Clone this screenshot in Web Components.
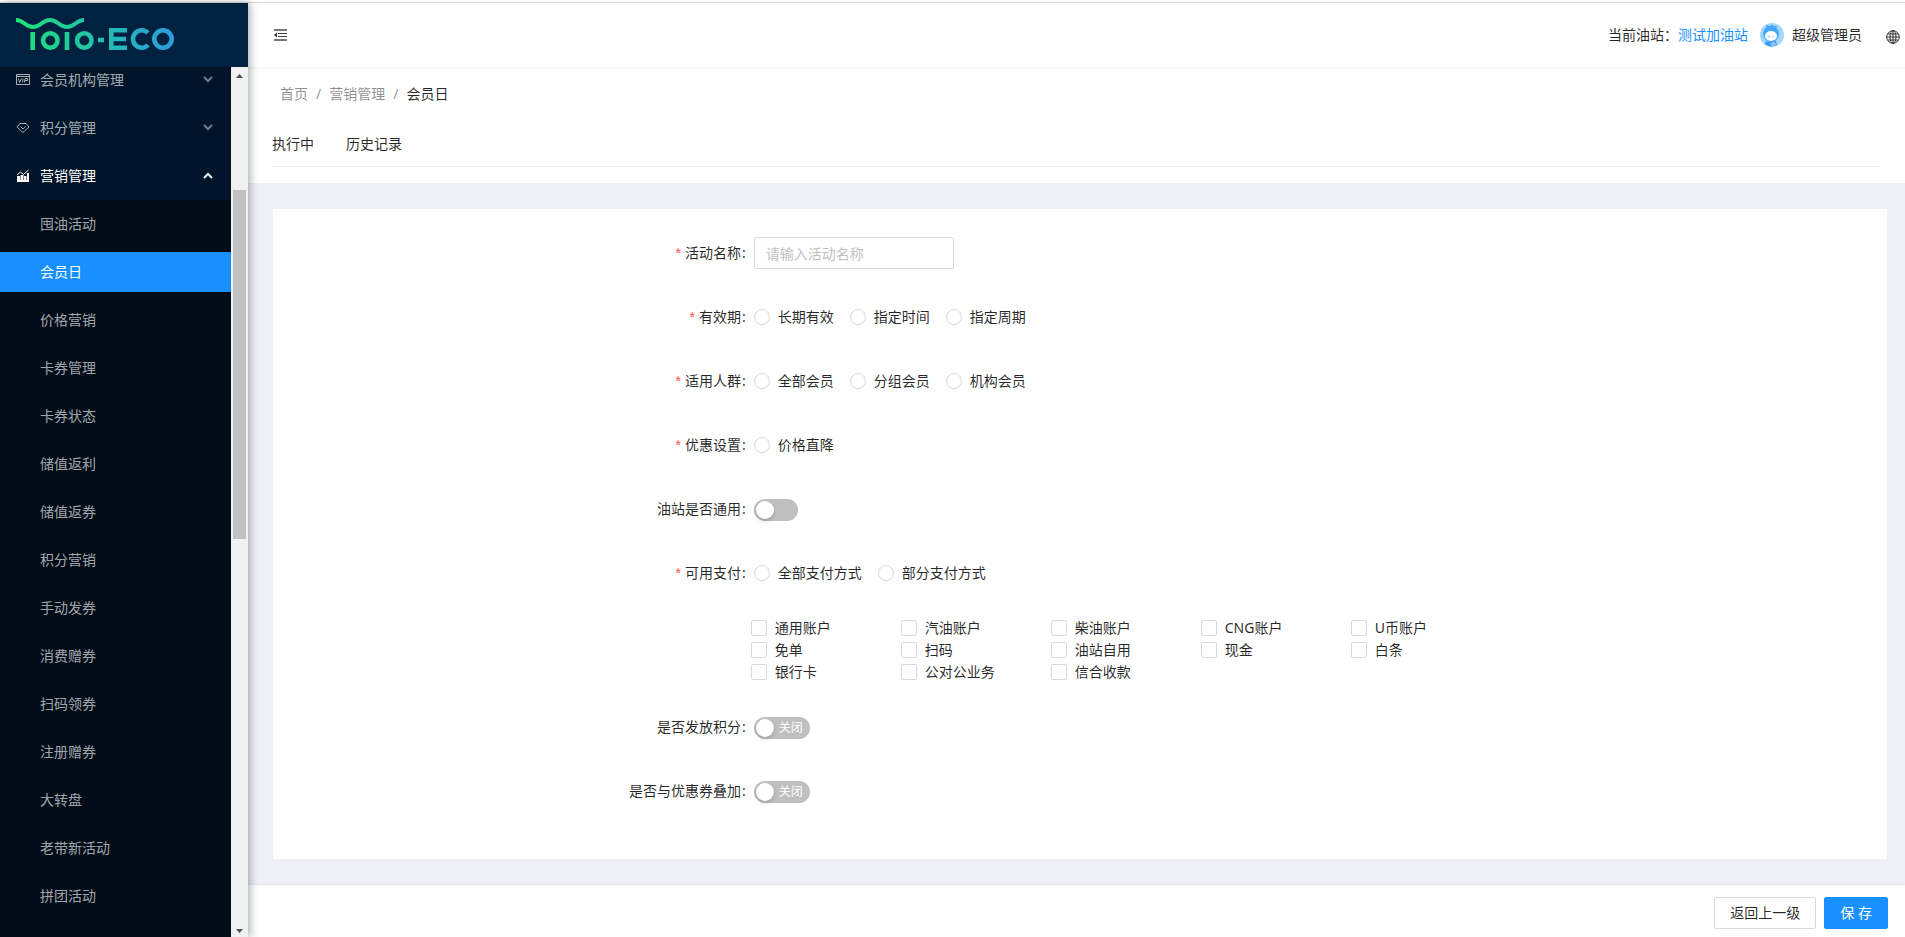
<!DOCTYPE html>
<html lang="zh-CN">
<head>
<meta charset="utf-8">
<title>会员日</title>
<style>
  html, body { height: 100%; }
  body {
    margin: 0;
    font: 14px/22px "Noto Sans", "Noto Sans CJK SC", sans-serif;
    color: rgba(0, 0, 0, .85);
    background: #fff;
  }
</style>
</head>
<body>
<eco-app></eco-app>
<script>
class Base extends HTMLElement {
  constructor() {
    super();
    this.attachShadow({ mode: 'open' });
  }
  connectedCallback() {
    if (!this.shadowRoot.firstChild) this.shadowRoot.innerHTML = this.view();
  }
  attr(name) { return this.getAttribute(name) || ''; }
}

customElements.define('eco-logo', class extends Base {
  view() {
    return `<style>
      :host { display: flex; flex: none; height: 64px; background: #002140; align-items: center; padding-left: 12px; }
      svg { display: block; }
    </style>
    <svg width="166" height="36" viewBox="12 17 166 36" fill="none" stroke="url(#g)" role="img" aria-label="TOTO-ECO">
      <defs><linearGradient id="g" gradientUnits="userSpaceOnUse" x1="16" y1="0" x2="176" y2="0">
        <stop offset="0" stop-color="#1be577"/><stop offset="1" stop-color="#2b9be0"/>
      </linearGradient></defs>
      <path stroke-width="4" d="M16 20C24 20 25 27 33 27C41 27 42 20 50 20C58 20 59 27 67 27C75 27 76 20 84 20"/>
      <path stroke-width="4.600" d="M32.700 32V50M67 32V50"/>
      <circle stroke-width="4.600" cx="50.300" cy="40.500" r="7.200"/>
      <circle stroke-width="4.600" cx="84.300" cy="40.500" r="7.200"/>
      <path stroke-width="4.600" d="M98 40H104M127 30.300H111.300V47.700H127M111 39H126"/>
      <path stroke-width="4.600" d="M148 33A8.700 8.700 0 1 0 148 45"/>
      <circle stroke-width="4.600" cx="163" cy="39" r="8.700"/>
    </svg>`;
  }
});

const MENU_ICONS = {
  vip: '<path d="M.5 1.500H13.500V11.500H.5ZM.5 3.500H13.500M2.500 5.500L3.500 9.500L5.500 5.500M7 5.500L6.500 9.500M8.500 9.500L9 5.500H11.500V7.500H9"/>',
  gem: '<path d="M4 2.500H10L13 6L7 11.500L1 6ZM4.500 5.500L7 8L9.500 5.500"/>',
  chart: '<path fill="currentColor" stroke="none" d="M1 7H4V11H1ZM4.500 6H7.500V11H4.500ZM8 7H10.500V11H8ZM11 4H13V11H11ZM1 11H13V13H1Z"/><path d="M1 6L4.500 3L7.500 5.500L12.500 1"/>'
};

customElements.define('eco-submenu', class extends Base {
  view() {
    const open = this.hasAttribute('open');
    return `<style>
      :host { display: flow-root; color: rgba(255, 255, 255, .65); }
      :host([open]) { color: #fff; }
      button { display: flex; align-items: center; width: 100%; height: 40px; margin: 4px 0; padding: 0 16px; border: 0; background: none; color: inherit; font: inherit; text-align: left; }
      .icon { margin-right: 10px; }
      .arrow { opacity: .7; }
      :host([open]) .arrow { opacity: 1; }
      span { flex: 1; }
      .items { background: #000c17; padding: 4px 0 48px; display: flex; flex-direction: column; gap: 8px; }
    </style>
    <button aria-expanded="${open}">
      <svg class="icon" width="14" height="14" viewBox="0 0 14 14" fill="none" stroke="currentColor">${MENU_ICONS[this.attr('icon')]}</svg>
      <span>${this.attr('label')}</span>
      <svg class="arrow" width="14" height="14" viewBox="0 0 14 14" fill="none" stroke="currentColor" stroke-width="2"><path d="${open ? 'M3 9L7 5L11 9' : 'M3 4L7 8L11 4'}"/></svg>
    </button>
    ${open ? '<div class="items"><slot></slot></div>' : ''}`;
  }
});

customElements.define('eco-menu-item', class extends Base {
  view() {
    return `<style>
      :host { display: block; color: rgba(255, 255, 255, .65); }
      :host([active]) { color: #fff; background: #1890ff; }
      a { display: block; padding-left: 40px; line-height: 40px; color: inherit; text-decoration: none; }
    </style><a href="#"><slot></slot></a>`;
  }
});

customElements.define('eco-scrollbar', class extends Base {
  view() {
    return `<style>
      :host { display: grid; grid-template-rows: 17px 106fr 349fr 381fr 17px; width: 17px; background: #f1f1f1; }
      i { grid-row: 3; margin: 0 2px; background: #c1c1c1; }
      svg { display: block; fill: #505050; }
      .down { grid-row: 5; }
    </style>
    <svg width="17" height="17"><path d="M5 11L8.500 7L12 11Z"/></svg>
    <i></i>
    <svg class="down" width="17" height="17"><path d="M5 9L8.500 13L12 9Z"/></svg>`;
  }
});

customElements.define('eco-sidebar', class extends Base {
  view() {
    const items = ['囤油活动', '会员日', '价格营销', '卡券管理', '卡券状态', '储值返利', '储值返券', '积分营销', '手动发券', '消费赠券', '扫码领券', '注册赠券', '大转盘', '老带新活动', '拼团活动'];
    return `<style>
      :host { display: flex; flex-direction: column; width: 248px; background: #001529; box-shadow: 2px 0 8px rgba(0, 21, 41, .35); }
      .scroll { flex: 1; min-height: 0; display: flex; }
      nav { flex: 1; overflow: hidden; display: flex; flex-direction: column; }
      .list { margin-top: -11px; }
    </style>
    <eco-logo></eco-logo>
    <div class="scroll">
      <nav><div class="list">
        <eco-submenu icon="vip" label="会员机构管理"></eco-submenu>
        <eco-submenu icon="gem" label="积分管理"></eco-submenu>
        <eco-submenu icon="chart" label="营销管理" open>
          ${items.map(t => `<eco-menu-item${t === '会员日' ? ' active' : ''}>${t}</eco-menu-item>`).join('')}
        </eco-submenu>
      </div></nav>
      <eco-scrollbar></eco-scrollbar>
    </div>`;
  }
});

customElements.define('eco-topbar', class extends Base {
  view() {
    return `<style>
      :host { display: flex; flex: none; align-items: center; height: 64px; padding: 0 5px 0 24px; background: #fff; box-shadow: 0 1px 4px rgba(0, 21, 41, .08); position: relative; }
      button { display: flex; padding: 0; border: 0; background: none; color: inherit; }
      .gap { flex: 1; }
      a { color: #1890ff; text-decoration: none; }
      .avatar { margin: 0 8px 0 12px; }
      .lang { margin: 4px 0 0 24px; }
    </style>
    <button aria-label="收起菜单"><svg width="16" height="16" viewBox="0 0 16 16" fill="none" stroke="#444"><path stroke="#777" stroke-width="2" d="M2 3H15M2 13H15"/><path d="M6 6.500H15M6 9.500H15"/><path fill="#333" stroke="none" d="M2 8L5 5.500V10.500Z"/></svg></button>
    <span class="gap"></span>
    <span>当前油站：</span><a href="#">测试加油站</a>
    <svg class="avatar" width="24" height="24" viewBox="0 0 24 24">
      <circle cx="12" cy="12" r="12" fill="#a3d6fb"/>
      <path d="M7 5L6 2L10 3.500L12 1.500L14 3.500L17 3L16 5Z" fill="#3f9bee"/>
      <circle cx="11" cy="11" r="8" fill="#42a9fb"/>
      <path d="M5 19C8 18 13 19 16 18L17 22C13 24 8 24 5 21Z" fill="#3f9bee"/>
      <path d="M10 20L15 19L16 22L12 23Z" fill="#8fc8f7"/>
      <ellipse cx="11" cy="13" rx="6" ry="5" fill="#fff"/>
      <path d="M7.500 13.500L9 14L10 13.500M12 14L13.500 13.500" stroke="#7bb8e8" fill="none"/>
    </svg>
    <span>超级管理员</span>
    <button class="lang" aria-label="语言"><svg width="14" height="14" viewBox="0 0 14 14" fill="none" stroke="#333"><circle cx="7" cy="7" r="6.300"/><ellipse cx="7" cy="7" rx="3" ry="6.300"/><path d="M7 .7V13.300M.7 7H13.300M1.700 4H12.300M1.700 10H12.300"/></svg></button>`;
  }
});

customElements.define('eco-page-head', class extends Base {
  view() {
    return `<style>
      :host { display: block; flex: none; background: #fff; padding: 16px 25px 16px 24px; }
      .crumbs { display: flex; gap: 8px; padding-left: 8px; color: rgba(0, 0, 0, .45); }
      a { color: inherit; text-decoration: none; }
      .crumbs b { font-weight: 400; color: rgba(0, 0, 0, .85); }
      .tabs { display: flex; gap: 32px; margin-top: 16px; padding: 12px 0 11px; border-bottom: 1px solid #f0f0f0; }
    </style>
    <nav class="crumbs"><a href="#">首页</a><span>/</span><a href="#">营销管理</a><span>/</span><b>会员日</b></nav>
    <nav class="tabs"><a href="#">执行中</a><a href="#">历史记录</a></nav>`;
  }
});

customElements.define('eco-field', class extends Base {
  view() {
    const id = this.attr('name');
    return `<style>
      :host { display: grid; grid-template-columns: 7fr 17fr; min-height: 40px; align-items: center; }
      .label { display: flex; justify-content: flex-end; gap: 4px; padding-right: 8px; white-space: nowrap; }
      .star { color: #ff4d4f; font-family: "Liberation Sans", sans-serif; }
      .text::after { content: ":"; margin-left: 1px; }
    </style>
    <div class="label" id="${id}">${this.hasAttribute('required') ? '<span class="star">*</span>' : ''}<span class="text">${this.attr('label')}</span></div>
    <div role="group" aria-labelledby="${id}"><slot></slot></div>`;
  }
});

customElements.define('eco-input', class extends Base {
  view() {
    return `<style>
      :host { display: block; width: 200px; }
      input { display: block; box-sizing: border-box; width: 100%; height: 32px; padding: 4px 11px; border: 1px solid #d9d9d9; border-radius: 2px; font: inherit; color: inherit; outline: 0; }
      input::placeholder { color: #bfbfbf; }
    </style><input type="text" aria-label="${this.attr('label')}" placeholder="${this.attr('placeholder')}">`;
  }
});

customElements.define('eco-radios', class extends Base {
  view() {
    return `<style>
      :host { display: flex; gap: 16px; }
      label { display: flex; align-items: center; gap: 8px; }
      input { appearance: none; box-sizing: border-box; width: 16px; height: 16px; margin: 0; border: 1px solid #d9d9d9; border-radius: 50%; background: #fff; }
      input:checked { border: 5px solid #1890ff; }
    </style>${this.attr('options').split(',').map(t => `<label><input type="radio" name="r"><span>${t}</span></label>`).join('')}`;
  }
});

customElements.define('eco-checks', class extends Base {
  view() {
    return `<style>
      :host { display: grid; grid-template-columns: repeat(5, 150px); margin-left: -3px; }
      label { display: flex; align-items: center; gap: 8px; }
      input { appearance: none; box-sizing: border-box; width: 16px; height: 16px; margin: 0; border: 1px solid #d9d9d9; border-radius: 2px; background: #fff; }
      input:checked { background: #1890ff; border-color: #1890ff; }
    </style>${this.attr('options').split(',').map(t => `<label><input type="checkbox"><span>${t}</span></label>`).join('')}`;
  }
});

customElements.define('eco-switch', class extends Base {
  view() {
    return `<style>
      :host { display: flex; padding-top: 2px; }
      button { display: flex; align-items: center; box-sizing: border-box; min-width: 44px; height: 22px; padding: 0 7px 0 2px; gap: 5px; border: 0; border-radius: 11px; background: #bfbfbf; color: #fff; font: inherit; font-size: 12px; }
      i { width: 18px; height: 18px; border-radius: 9px; background: #fff; box-shadow: 0 2px 4px rgba(0, 35, 11, .2); }
    </style><button role="switch" aria-checked="false" aria-label="${this.attr('label')}"><i></i><slot></slot></button>`;
  }
});

customElements.define('eco-button', class extends Base {
  view() {
    return `<style>
      :host { display: block; }
      button { display: block; box-sizing: border-box; height: 32px; padding: 0 15px; border: 1px solid #d9d9d9; border-radius: 2px; background: #fff; color: inherit; font: inherit; }
      :host([primary]) button { background: #1890ff; border-color: #1890ff; color: #fff; }
    </style><button><slot></slot></button>`;
  }
});

customElements.define('eco-form', class extends Base {
  view() {
    return `<style>
      :host { display: flex; flex-direction: column; gap: 24px; margin: 26px 18px 26px 25px; padding: 24px 24px 48px; background: #fff; }
    </style>
    <eco-field name="title" label="活动名称" required><eco-input label="活动名称" placeholder="请输入活动名称"></eco-input></eco-field>
    <eco-field name="period" label="有效期" required><eco-radios options="长期有效,指定时间,指定周期"></eco-radios></eco-field>
    <eco-field name="people" label="适用人群" required><eco-radios options="全部会员,分组会员,机构会员"></eco-radios></eco-field>
    <eco-field name="discount" label="优惠设置" required><eco-radios options="价格直降"></eco-radios></eco-field>
    <eco-field name="station" label="油站是否通用"><eco-switch label="油站是否通用"></eco-switch></eco-field>
    <eco-field name="payment" label="可用支付" required><eco-radios options="全部支付方式,部分支付方式"></eco-radios></eco-field>
    <eco-pay-list></eco-pay-list>
    <eco-field name="points" label="是否发放积分"><eco-switch label="是否发放积分">关闭</eco-switch></eco-field>
    <eco-field name="stack" label="是否与优惠券叠加"><eco-switch label="是否与优惠券叠加">关闭</eco-switch></eco-field>`;
  }
});

customElements.define('eco-pay-list', class extends Base {
  view() {
    return `<style>
      :host { display: grid; grid-template-columns: 7fr 17fr; }
      eco-checks { grid-column: 2; }
    </style><eco-checks options="通用账户,汽油账户,柴油账户,CNG账户,U币账户,免单,扫码,油站自用,现金,白条,银行卡,公对公业务,信合收款"></eco-checks>`;
  }
});

customElements.define('eco-footer', class extends Base {
  view() {
    return `<style>
      :host { display: flex; flex: none; justify-content: flex-end; gap: 8px; padding: 12px 17px 8px; background: #fff; box-shadow: 0 -1px 2px rgba(0, 0, 0, .05); }
    </style><eco-button>返回上一级</eco-button><eco-button primary>保 存</eco-button>`;
  }
});

customElements.define('eco-app', class extends Base {
  view() {
    return `<style>
      :host { display: flex; flex-direction: column; height: 100vh; overflow: hidden; }
      .edge { flex: none; height: 2px; border-bottom: 1px solid #dcdcdc; }
      .layout { flex: 1; min-height: 0; display: flex; }
      eco-sidebar { flex: none; position: relative; z-index: 2; }
      main { flex: 1; min-width: 0; display: flex; flex-direction: column; background: #eff0f5; }
      eco-topbar { z-index: 1; }
      .body { flex: 1; min-height: 0; overflow: hidden; }
    </style>
    <div class="edge"></div>
    <div class="layout">
      <eco-sidebar></eco-sidebar>
      <main>
        <eco-topbar></eco-topbar>
        <eco-page-head></eco-page-head>
        <div class="body"><eco-form></eco-form></div>
        <eco-footer></eco-footer>
      </main>
    </div>`;
  }
});
</script>
</body>
</html>
